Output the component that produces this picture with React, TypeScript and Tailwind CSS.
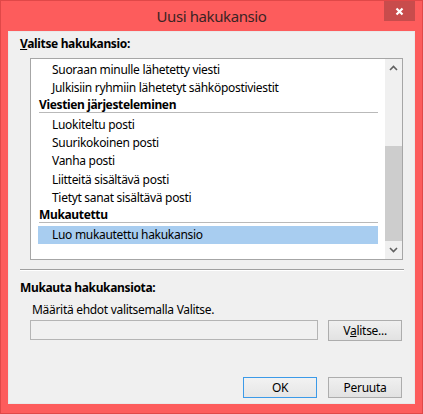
import React from "react";

const font = { fontFamily: '"Noto Sans", "Open Sans", sans-serif' };

function Row({ children, h = "h-[18px]" }: { children: React.ReactNode; h?: string }) {
  return (
    <div className={`${h} flex items-center pl-[21px] text-[12px] tracking-[-0.3px] text-black whitespace-nowrap`}>{children}</div>
  );
}

function Header({ children }: { children: React.ReactNode }) {
  return (
    <div>
      <div className="h-[15px] flex items-center pl-[8px] text-[12px] tracking-[-0.35px] font-bold text-black whitespace-nowrap">{children}</div>
      <div className="ml-[8px] mr-[7px] h-[1px] bg-[#b9b9b9]" />
    </div>
  );
}

function Chevron({ up }: { up?: boolean }) {
  return (
    <svg width="9" height="6" viewBox="0 0 9 6">
      <path
        d={up ? "M1 5 L4.5 1.5 L8 5" : "M1 1 L4.5 4.5 L8 1"}
        fill="none"
        stroke="#606060"
        strokeWidth="1.6"
      />
    </svg>
  );
}

function Button({ children, primary }: { children: React.ReactNode; primary?: boolean }) {
  return (
    <div
      className={`w-[74px] h-[21px] flex items-center justify-center text-[12px] tracking-[-0.3px] text-black border ${
        primary ? "border-[#3c9ae8] bg-gradient-to-b from-[#f2f2f2] to-[#e6e6e6]" : "border-[#adadad] bg-gradient-to-b from-[#f0f0f0] to-[#e2e2e2]"
      }`}
    >
      {children}
    </div>
  );
}

export default function App() {
  return (
    <div style={font} className="w-[423px] h-[414px] bg-[#fd5c5c] border border-[#e04848] flex flex-col">
      {/* title bar */}
      <div className="h-[30px] flex relative">
        <div className="flex-1 flex items-center justify-center pt-[1px] text-[15px] tracking-[-0.4px] text-[#3a2424]">Uusi hakukansio</div>
        <div className="absolute right-[7px] top-0 w-[31px] h-[20px] bg-[#c84c4c] flex items-center justify-center">
          <svg width="9" height="9" viewBox="0 0 9 9">
            <path d="M1.5 1.5 L7.5 7.5 M7.5 1.5 L1.5 7.5" stroke="#ffffff" strokeWidth="2.2" />
          </svg>
        </div>
      </div>

      {/* client area */}
      <div className="mx-[7px] h-[373px] bg-[#f0f0f0] border border-[#e9e9e9] flex flex-col text-black">
        <div className="pl-[11px] pt-[4px] h-[26px] text-[12px] tracking-[-0.35px] font-bold leading-[16px]">
          <span className="underline">V</span>alitse hakukansio:
        </div>

        {/* folder list */}
        <div className="ml-[21px] w-[373px] h-[202px] border border-[#a6a6a6] bg-white flex">
          <div className="flex-1 pt-[1px]">
            <Row h="h-[19px]">Suoraan minulle lähetetty viesti</Row>
            <Row>Julkisiin ryhmiin lähetetyt sähköpostiviestit</Row>
            <Header>Viestien järjesteleminen</Header>
            <div className="h-[3px]" />
            <Row>Luokiteltu posti</Row>
            <Row>Suurikokoinen posti</Row>
            <Row>Vanha posti</Row>
            <Row h="h-[19px]">Liitteitä sisältävä posti</Row>
            <Row>Tietyt sanat sisältävä posti</Row>
            <Header>Mukautettu</Header>
            <div className="h-[3px]" />
            <div className="ml-[7px] mr-[7px] h-[18px] bg-[#a8cdf0] flex items-center pl-[14px] text-[12px] tracking-[-0.3px] whitespace-nowrap">
              Luo mukautettu hakukansio
            </div>
          </div>
          <div className="w-[17px] bg-[#f0f0f0] flex flex-col">
            <div className="h-[17px] flex items-center justify-center">
              <Chevron up />
            </div>
            <div className="h-[70px]" />
            <div className="h-[95px] bg-[#cdcdcd]" />
            <div className="flex-1 flex items-center justify-center">
              <Chevron />
            </div>
          </div>
        </div>

        {/* etched separator */}
        <div className="mt-[9px] ml-[11px] w-[384px] h-[1px] bg-[#a0a0a0]" />
        <div className="ml-[11px] w-[384px] h-[1px] bg-white" />

        <div className="pl-[11px] mt-[9px] h-[16px] text-[12px] tracking-[-0.35px] font-bold leading-[16px]">Mukauta hakukansiota:</div>
        <div className="pl-[23px] mt-[6px] h-[16px] text-[12px] tracking-[-0.3px] leading-[16px]">Määritä ehdot valitsemalla Valitse.</div>

        <div className="mt-[2px] ml-[21px] flex items-start gap-[10px]">
          <div className="w-[288px] h-[20px] border border-[#b4b4b4] bg-[#f0f0f0]" />
          <Button>
            V<span className="underline">a</span>litse...
          </Button>
        </div>

        <div className="mt-[36px] flex justify-end gap-[11px] pr-[12px]">
          <Button primary>OK</Button>
          <Button>Peruuta</Button>
        </div>
      </div>
    </div>
  );
}
